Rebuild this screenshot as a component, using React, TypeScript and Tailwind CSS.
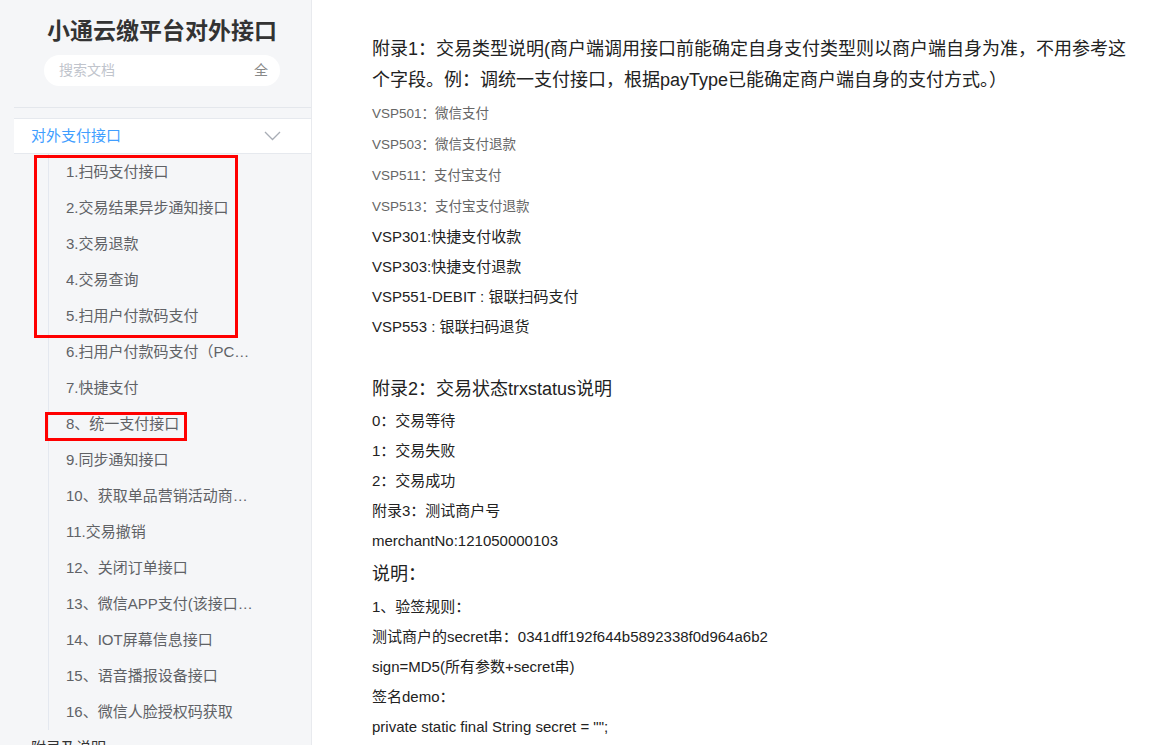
import React from 'react'

const items = [
  '1.扫码支付接口',
  '2.交易结果异步通知接口',
  '3.交易退款',
  '4.交易查询',
  '5.扫用户付款码支付',
  '6.扫用户付款码支付（PC端）',
  '7.快捷支付',
  '8、统一支付接口',
  '9.同步通知接口',
  '10、获取单品营销活动商品信息',
  '11.交易撤销',
  '12、关闭订单接口',
  '13、微信APP支付(该接口已废弃)',
  '14、IOT屏幕信息接口',
  '15、语音播报设备接口',
  '16、微信人脸授权码获取',
]

const smallCodes = [
  ['VSP501', '微信支付'],
  ['VSP503', '微信支付退款'],
  ['VSP511', '支付宝支付'],
  ['VSP513', '支付宝支付退款'],
]

const codes = ['VSP301:快捷支付收款', 'VSP303:快捷支付退款', 'VSP551-DEBIT : 银联扫码支付', 'VSP553 : 银联扫码退货']

function Sidebar(){
  return (
    <aside className="relative w-[312px] shrink-0 h-full overflow-hidden bg-[#f5f6f8] border-r border-[#e8eaee]">
      <div className="pt-[15px] pl-[13px] text-center text-[23px] leading-[32px] font-bold text-[#333]">小通云缴平台对外接口</div>
      <div className="mt-[8px] ml-[44px] w-[236px] h-[31px] rounded-full bg-white flex items-center justify-between pl-[15px] pr-[12px] text-[14px]">
        <span className="text-[#c0c4cc]">搜索文档</span>
        <span className="text-[#888]">全</span>
      </div>
      <div className="mt-[21px] ml-[14px] border-t border-[#e4e7ec]"></div>
      <div className="mt-[10px] ml-[14px] h-[36px] bg-white border-y border-[#e6e9ee] flex items-center justify-between pl-[17px] pr-[30px]">
        <span className="text-[15px] text-[#409eff]">对外支付接口</span>
        <svg width="17" height="10" viewBox="0 0 17 10" fill="none" stroke="#a8adb5" strokeWidth="1.3">
          <polyline points="1,1 8.5,8.5 16,1" />
        </svg>
      </div>
      <div className="ml-[48px] border-l border-[#e4e8ef] pl-[17px]">
        {items.map(t => (
          <div key={t} className="h-[36px] leading-[36px] text-[15px] text-[#606266] w-[190px] truncate">{t}</div>
        ))}
      </div>
      <div className="h-[36px] leading-[36px] pl-[31px] text-[15px] text-[#333]">附录及说明</div>

      <div className="absolute left-[34px] top-[155px] w-[204px] h-[183px] border-[3px] border-[#ff0000]"></div>
      <div className="absolute left-[45px] top-[412px] w-[142px] h-[29px] border-[3px] border-[#ff0000]"></div>
    </aside>
  )
}

export default function App(){
  return (
    <div className="flex h-[745px] w-full overflow-hidden bg-white" style={{ fontFamily: '"Liberation Sans", "Noto Sans CJK SC", sans-serif' }}>
      <Sidebar />
      <main className="flex-1 pl-[60px] pt-[34px] text-[#333]">
        <div className="w-[764px]">
          <div className="text-[18px] leading-[31px] text-[#222]">附录1：交易类型说明(商户端调用接口前能确定自身支付类型则以商户端自身为准，不用参考这个字段。例：调统一支付接口，根据payType已能确定商户端自身的支付方式。）</div>
          <div className="mt-[2px]">
            {smallCodes.map(([c, t]) => (
              <div key={c} className="text-[13.5px] leading-[31px] text-[#666]">{c}：{t}</div>
            ))}
          </div>
          {codes.map(c => (
            <div key={c} className="text-[15px] leading-[30px] text-[#222]">{c}</div>
          ))}
          <div className="mt-[32px] text-[18px] leading-[31px] text-[#222]">附录2：交易状态trxstatus说明</div>
          <div className="mt-[1px] text-[15px] leading-[30px] text-[#222]">
            <div>0：交易等待</div>
            <div>1：交易失败</div>
            <div>2：交易成功</div>
            <div>附录3：测试商户号</div>
            <div>merchantNo:121050000103</div>
            <div className="text-[18px] leading-[36px]">说明：</div>
            <div>1、验签规则：</div>
            <div>测试商户的secret串：0341dff192f644b5892338f0d964a6b2</div>
            <div>sign=MD5(所有参数+secret串)</div>
            <div>签名demo：</div>
            <div>private static final String secret = "";</div>
          </div>
        </div>
      </main>
    </div>
  )
}
